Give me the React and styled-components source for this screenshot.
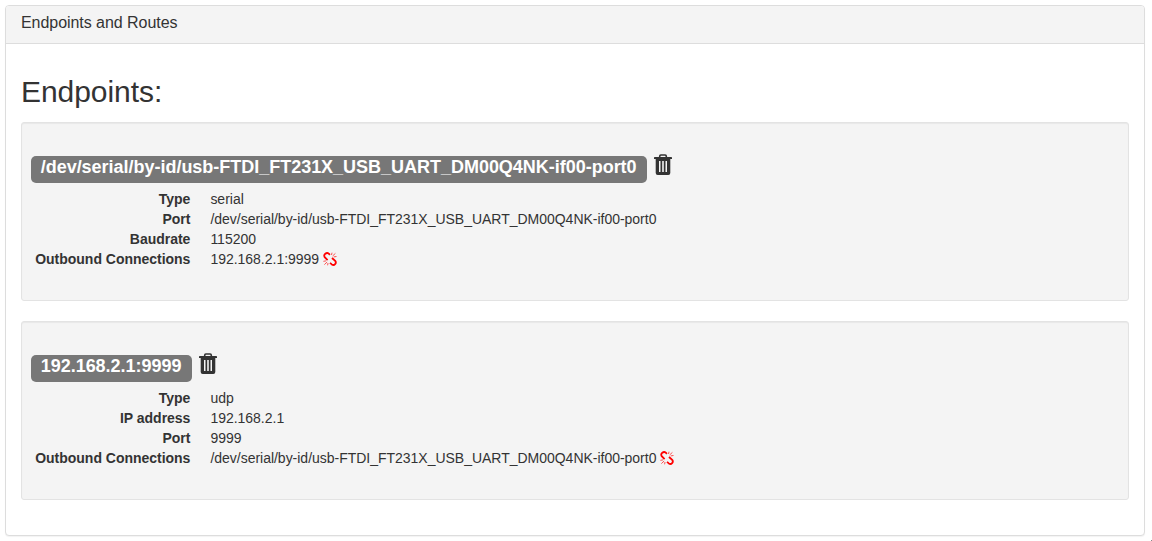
import React from "react";
import styled, { createGlobalStyle } from "styled-components";

const Global = createGlobalStyle`
  *, *::before, *::after { box-sizing: border-box; }
  html, body { margin: 0; overflow: hidden; }
  body {
    background: #fff;
    color: #333;
    font: 14px/20px "Liberation Sans", Arial, sans-serif;
  }
`;

const Page = styled.main`
  height: 541px;
  padding: 5px 7px 5px 5px;
`;

const Panel = styled.section`
  height: 531px;
  border: 1px solid #ddd;
  border-radius: 4px;
  background: #fff;
  box-shadow: 0 1px 1px rgba(0, 0, 0, 0.05);
`;

const PanelHeading = styled.header`
  height: 38px;
  padding: 8px 15px 10px;
  background: #f4f4f4;
  border-bottom: 1px solid #ddd;
  border-radius: 3px 3px 0 0;
`;

const PanelTitle = styled.h3`
  margin: 0;
  font-size: 16px;
  font-weight: 400;
  line-height: 18px;
  letter-spacing: -0.05px;
`;

const PanelBody = styled.div`
  padding: 15px;
`;

const Heading = styled.h2`
  margin: 16px 0 14px;
  font-size: 30px;
  font-weight: 400;
  line-height: 33px;
  letter-spacing: -0.05px;
`;

const Well = styled.article`
  height: 179px;
  margin-bottom: 20px;
  padding: 9px;
  background: #f4f4f4;
  border: 1px solid #e3e3e3;
  border-radius: 3px;
  box-shadow: inset 0 1px 1px rgba(0, 0, 0, 0.05);
`;

const EndpointTitle = styled.h3`
  display: flex;
  align-items: flex-start;
  gap: 7.2px;
  height: 33px;
  margin: 24px 0 0;
`;

const Label = styled.span`
  height: 27px;
  padding: 2px 10.4px 0 9.7px;
  background: #777;
  border-radius: 5px;
  color: #fff;
  font-size: 18px;
  font-weight: 700;
  line-height: 18px;
  letter-spacing: -0.02px;
  white-space: nowrap;
`;

const TrashIcon = styled.svg`
  flex: none;
  width: 18px;
  height: 21px;
  margin-top: -2px;
`;

const Details = styled.dl`
  display: grid;
  grid-template-columns: 159.4px 1fr;
  column-gap: 20px;
  margin: 0;
  letter-spacing: -0.018px;
`;

const Term = styled.dt`
  font-weight: 700;
  text-align: right;
  white-space: nowrap;
`;

const Value = styled.dd`
  display: flex;
  gap: 3.5px;
  margin: 0;
`;

const UnlinkIcon = styled.svg`
  width: 14px;
  height: 14px;
  margin-top: 2.5px;
`;

const Corner = styled.i`
  position: absolute;
  left: 1151px;
  top: 540px;
  width: 1px;
  height: 1px;
  background: #888;
`;

function Trash() {
  return (
    <TrashIcon viewBox="0 0 18 21">
      <path d="M5.7 3.4V2.2Q5.7 1 6.9 1h4.2q1.2 0 1.2 1.2v1.2" fill="none" stroke="#333" strokeWidth="1.6" />
      <path
        fill="#333"
        fillRule="evenodd"
        d="M.7 2.9h16.6q.7 0 .7.8V5H0V3.7Q0 2.9.7 2.9zM1.7 5h14.6v14q0 2-2 2H3.7q-2 0-2-2zM5 7v11h1.5V7zM8.2 7v11h1.6V7zM11.5 7v11H13V7z"
      />
    </TrashIcon>
  );
}

function Unlink() {
  return (
    <UnlinkIcon viewBox="0 0 14 14" fill="none" stroke="#f00">
      <path
        strokeWidth="1.8"
        d="M6.9 2.8L5.8 1.6Q4.1 .3 2.3 1.7T1.7 5.2L4.6 8.1M9 6L12.2 8.9Q13.5 10.5 12.1 12.1T8.8 12.4L7 10.9"
      />
      <path
        strokeWidth="0.9"
        strokeOpacity="0.75"
        d="M8.5 3L9 .7M9.7 3.9L12.4 1.4M10.7 4.9L13.5 4.5M.4 9.3L3 8.9M1.4 12.6L4.1 10M5 11L4.6 13.3"
      />
    </UnlinkIcon>
  );
}

const device = "/dev/serial/by-id/usb-FTDI_FT231X_USB_UART_DM00Q4NK-if00-port0";
const address = "192.168.2.1:9999";

const endpoints = [
  {
    name: device,
    fields: [["Type", "serial"], ["Port", device], ["Baudrate", "115200"]],
    outbound: address,
  },
  {
    name: address,
    fields: [["Type", "udp"], ["IP address", "192.168.2.1"], ["Port", "9999"]],
    outbound: device,
  },
];

function Endpoint({ name, fields, outbound }) {
  return (
    <Well>
      <EndpointTitle>
        <Label>{name}</Label>
        <Trash />
      </EndpointTitle>
      <Details>
        {fields.map(([term, value]) => (
          <React.Fragment key={term}>
            <Term>{term}</Term>
            <Value>{value}</Value>
          </React.Fragment>
        ))}
        <Term>Outbound Connections</Term>
        <Value>
          {outbound}
          <Unlink />
        </Value>
      </Details>
    </Well>
  );
}

export default function App() {
  return (
    <Page>
      <Global />
      <Panel>
        <PanelHeading>
          <PanelTitle>Endpoints and Routes</PanelTitle>
        </PanelHeading>
        <PanelBody>
          <Heading>Endpoints:</Heading>
          {endpoints.map((endpoint) => (
            <Endpoint key={endpoint.name} {...endpoint} />
          ))}
        </PanelBody>
      </Panel>
      <Corner />
    </Page>
  );
}
